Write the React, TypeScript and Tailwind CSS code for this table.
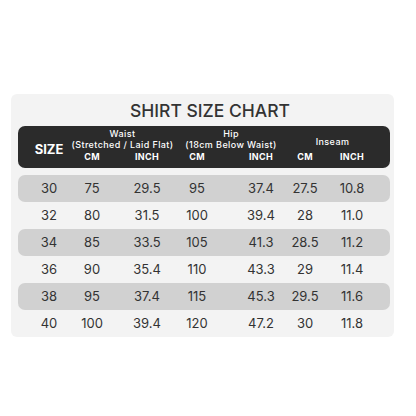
import React from "react";

const rows = [
  ["30", "75", "29.5", "95", "37.4", "27.5", "10.8"],
  ["32", "80", "31.5", "100", "39.4", "28", "11.0"],
  ["34", "85", "33.5", "105", "41.3", "28.5", "11.2"],
  ["36", "90", "35.4", "110", "43.3", "29", "11.4"],
  ["38", "95", "37.4", "115", "45.3", "29.5", "11.6"],
  ["40", "100", "39.4", "120", "47.2", "30", "11.8"],
];

const ml = ["ml-[11px]", "ml-[3px]", "ml-[15px]", "ml-[10px]", "ml-[24px]", "ml-[4px]", "ml-[7px]"];

export default function App() {
  return (
    <div className="w-[416px] h-[416px] bg-white pt-[94px] pl-[11px]" style={{ fontFamily: "Inter, 'Noto Sans', sans-serif" }}>
      <div className="w-[383px] h-[243px] bg-[#f3f3f3] rounded-[6px] pl-[7px] flex flex-col">
        <div className="h-[32px] flex items-center justify-center pl-[8px] pt-[1px] text-[17.5px] leading-none text-[#333333] font-medium">
          SHIRT SIZE CHART
        </div>
        <div className="w-[372px] h-[42px] bg-[#2b2b2b] rounded-[7px] flex text-white">
          <div className="ml-[11px] w-[40px] flex items-center justify-center pt-[6px] text-[13px] font-bold">SIZE</div>
          <div className="ml-[3px] w-[95px] flex flex-col">
            <div className="pt-[2px] h-[24px] flex flex-col items-center translate-x-[3px] whitespace-nowrap text-[9px] leading-[11px] font-medium tracking-[0.4px]">
              <span className="block">Waist</span>
              <span className="block">(Stretched / Laid Flat)</span>
            </div>
            <div className="flex text-[9px] font-bold leading-[10px] mt-[2px] tracking-[0.3px]">
              <span className="w-[40px] text-center">CM</span>
              <span className="w-[40px] ml-[15px] text-center">INCH</span>
            </div>
          </div>
          <div className="ml-[10px] w-[104px] flex flex-col">
            <div className="pt-[2px] h-[24px] flex flex-col items-center translate-x-[2px] whitespace-nowrap text-[9px] leading-[11px] font-medium tracking-[0.4px]">
              <span className="block">Hip</span>
              <span className="block">(18cm Below Waist)</span>
            </div>
            <div className="flex text-[9px] font-bold leading-[10px] mt-[2px] tracking-[0.3px]">
              <span className="w-[40px] text-center">CM</span>
              <span className="w-[40px] ml-[24px] text-center">INCH</span>
            </div>
          </div>
          <div className="ml-[4px] w-[87px] flex flex-col">
            <div className="h-[24px] flex items-center justify-center translate-x-[4px] pt-[6px] text-[9px] leading-[11px] font-medium tracking-[0.4px]">
              Inseam
            </div>
            <div className="flex text-[9px] font-bold leading-[10px] mt-[2px] tracking-[0.3px]">
              <span className="w-[40px] text-center">CM</span>
              <span className="w-[40px] ml-[7px] text-center">INCH</span>
            </div>
          </div>
        </div>
        <div className="mt-[7px] flex flex-col">
          {rows.map((r, i) => (
            <div
              key={i}
              className={`w-[372px] h-[27px] flex items-center rounded-[7px] text-[13px] text-[#333333] ${i % 2 === 0 ? "bg-[#d1d1d1]" : ""}`}
            >
              {r.map((v, j) => (
                <div key={j} className={`${ml[j]} w-[40px] text-center`}>
                  {v}
                </div>
              ))}
            </div>
          ))}
        </div>
      </div>
    </div>
  );
}
